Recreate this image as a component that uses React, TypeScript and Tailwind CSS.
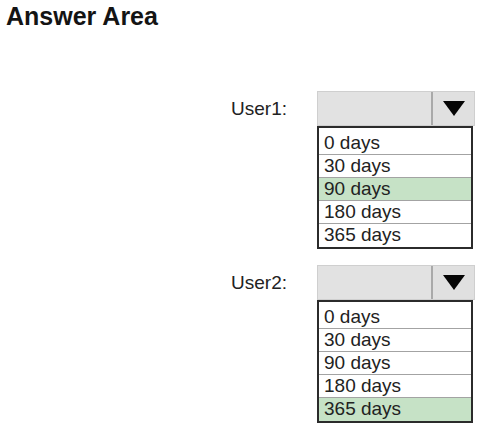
const options = ["0 days", "30 days", "90 days", "180 days", "365 days"];

const answers = [
  { label: "User1:", selected: "90 days" },
  { label: "User2:", selected: "365 days" },
];

const Dropdown = ({ selected }: { selected: string }) => {
  return (
    <div className="flex w-[158px] flex-col">
      <div className="flex h-[35px] w-[158px] border border-[#cfcfcf] bg-[#e2e2e2]">
        <div className="flex-1" />
        <div className="flex w-[43px] items-center justify-center border-l-2 border-[#a9a9a9] bg-[#e0e0e0]">
          <svg width="22" height="15" viewBox="0 0 22 15">
            <polygon points="0,0 22,0 11,15" fill="#050505" />
          </svg>
        </div>
      </div>

      {/* list of choices */}
      <ul className="w-[156px] border-2 border-[#2b2b2b] bg-white pt-[4px]">
        {options.map((opt, i) => (
          <li
            key={opt}
            className={`h-[23px] pl-[5px] text-[19px] leading-[22px] text-[#222] ${
              i < options.length - 1 ? "border-b border-[#a3a3a3]" : "h-[22px]"
            } ${opt === selected ? "bg-[#c6e2c6] text-[#1f3a1f]" : ""}`}
          >
            {opt}
          </li>
        ))}
      </ul>
    </div>
  );
};

const App = () => {
  return (
    <div className="min-h-[438px] w-[499px] bg-white font-['Liberation_Sans',Arial,sans-serif]">
      <h1 className="pl-[6px] pt-[4px] text-[25px] font-bold leading-[25px] text-[#141414]">
        Answer Area
      </h1>

      <div className="mt-[62px] flex flex-col gap-[16px]">
        {answers.map((a) => (
          <div key={a.label} className="grid grid-cols-[317px_158px] items-start">
            <div className="pr-[30px] pt-[7px] text-right text-[19px] leading-[22px] text-[#222]">
              {a.label}
            </div>
            <Dropdown selected={a.selected} />
          </div>
        ))}
      </div>
    </div>
  );
};

export default App;
